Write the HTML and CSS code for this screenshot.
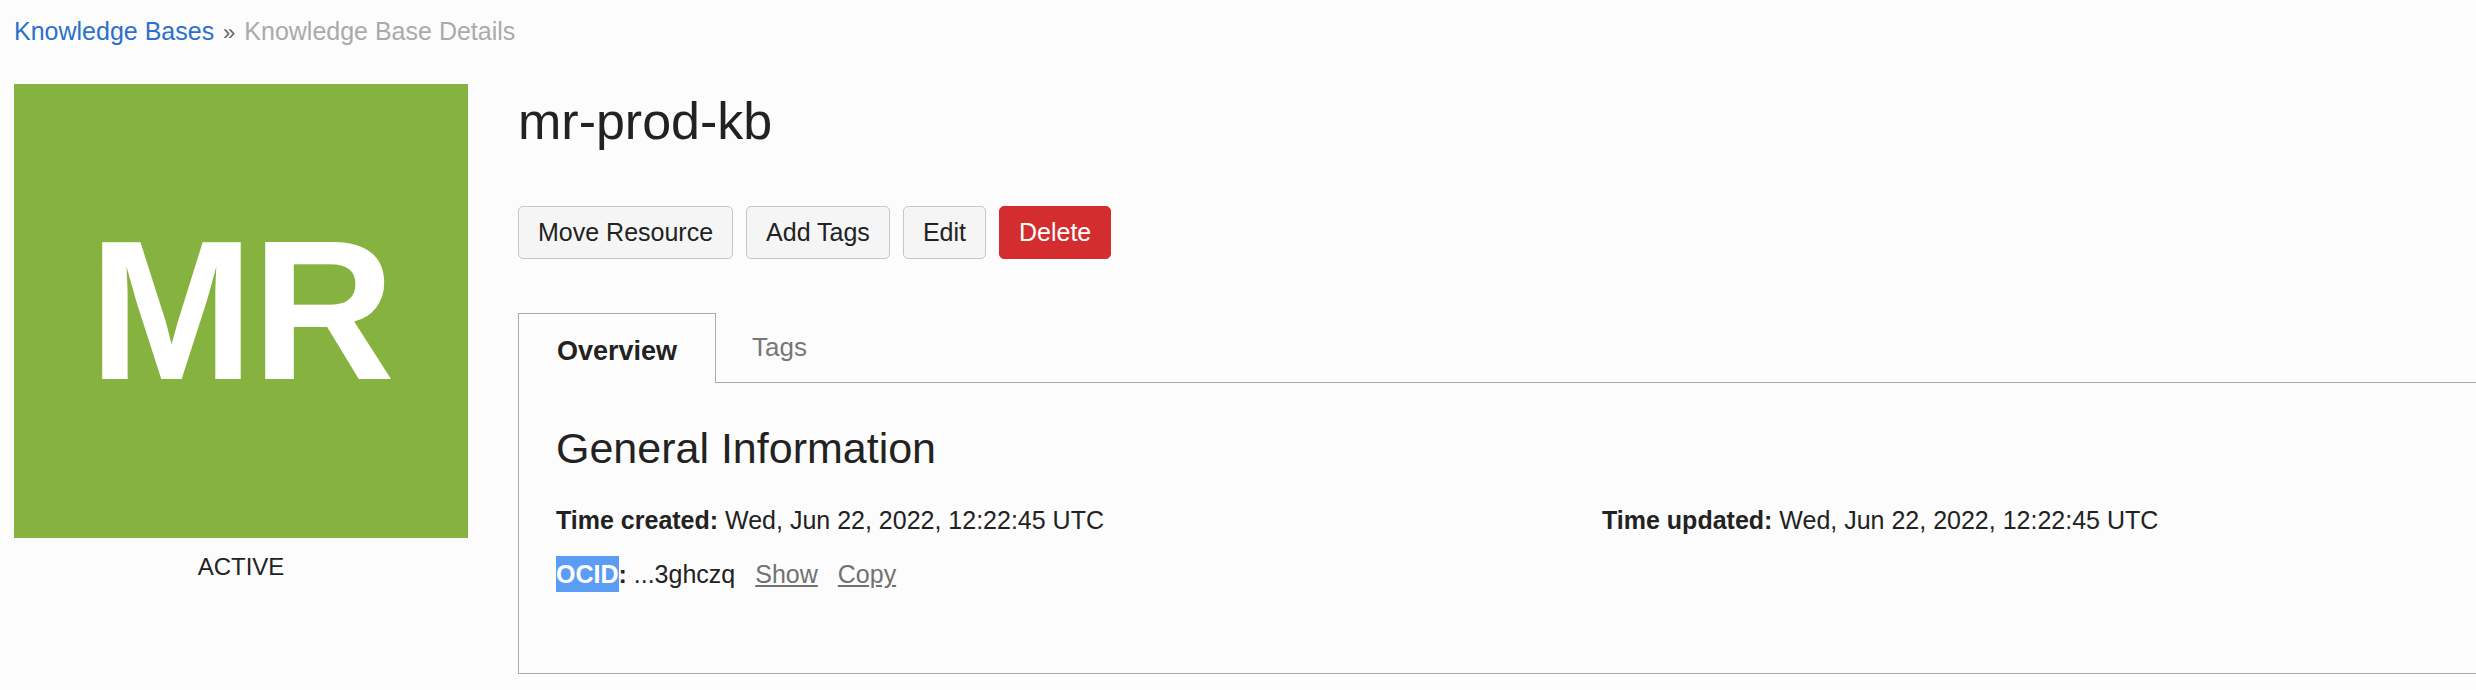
FILE: index.html
```html
<!DOCTYPE html>
<html lang="en">
<head>
<meta charset="utf-8">
<title>Knowledge Base Details</title>
<link rel="stylesheet" href="styles.css">
</head>
<body>
<div class="page">
  <nav class="breadcrumb">
    <a class="crumb-link" href="#">Knowledge Bases</a>
    <span class="crumb-sep">»</span>
    <span class="crumb-current">Knowledge Base Details</span>
  </nav>
  <div class="layout">
    <aside class="side">
      <div class="avatar">MR</div>
      <div class="status">ACTIVE</div>
    </aside>
    <main class="main">
      <h1 class="title">mr-prod-kb</h1>
      <div class="actions">
        <button class="btn">Move Resource</button>
        <button class="btn">Add Tags</button>
        <button class="btn">Edit</button>
        <button class="btn btn-danger">Delete</button>
      </div>
      <div class="tabs">
        <div class="tab tab-active">Overview</div>
        <div class="tab">Tags</div>
      </div>
      <section class="panel">
        <h2 class="panel-title">General Information</h2>
        <div class="info-grid">
          <div class="info-col">
            <div class="info-row"><span class="label">Time created:</span> Wed, Jun 22, 2022, 12:22:45 UTC</div>
            <div class="info-row"><span class="label"><span class="selected">OCID</span>:</span> ...3ghczq<a class="inline-link" href="#">Show</a><a class="inline-link" href="#">Copy</a></div>
          </div>
          <div class="info-col">
            <div class="info-row"><span class="label">Time updated:</span> Wed, Jun 22, 2022, 12:22:45 UTC</div>
          </div>
        </div>
      </section>
    </main>
  </div>
</div>
</body>
</html>
```
FILE: styles.css
```css
* {
  box-sizing: border-box;
}

html, body {
  margin: 0;
  padding: 0;
  background: #fcfcfc;
  overflow: hidden;
}

body {
  font-family: "Liberation Sans", Arial, Helvetica, sans-serif;
  color: #222222;
}

.page {
  padding-left: 14px;
}

.breadcrumb {
  padding-top: 16px;
  font-size: 25px;
  line-height: 30px;
  height: 84px;
  white-space: nowrap;
}

.crumb-link {
  color: #2c70cb;
  text-decoration: none;
}

.crumb-sep {
  color: #666666;
  font-size: 22px;
  margin: 0 2px;
}

.crumb-current {
  color: #aaaaaa;
}

.layout {
  display: flex;
  align-items: flex-start;
  gap: 50px;
}

.side {
  width: 454px;
  flex: none;
  display: flex;
  flex-direction: column;
  align-items: center;
}

.avatar {
  width: 454px;
  height: 454px;
  background: #86b23f;
  color: #ffffff;
  font-weight: bold;
  font-size: 198px;
  line-height: 1;
  display: flex;
  align-items: center;
  justify-content: center;
  letter-spacing: -2px;
}

.status {
  margin-top: 15px;
  font-size: 24px;
  line-height: 28px;
  color: #222222;
}

.main {
  flex: 1;
  min-width: 0;
}

.title {
  margin: 7px 0 0;
  font-size: 52px;
  font-weight: normal;
  line-height: 60px;
  color: #222222;
}

.actions {
  margin-top: 55px;
  display: flex;
  gap: 13px;
}

.btn {
  height: 53px;
  padding: 0 19px;
  font-family: inherit;
  font-size: 25px;
  color: #222222;
  background: #f5f5f5;
  border: 1px solid #c3c6ca;
  border-radius: 5px;
}

.btn-danger {
  background: #d32d2f;
  border-color: #d32d2f;
  color: #ffffff;
}

.tabs {
  margin-top: 54px;
  display: flex;
  height: 70px;
  border-bottom: 1px solid #ababab;
}

.tab {
  height: 69px;
  padding: 0 36px;
  font-size: 26px;
  line-height: 69px;
  color: #777777;
}

.tab-active {
  height: 70px;
  padding: 6px 38px 0;
  line-height: 63px;
  font-size: 27px;
  font-weight: bold;
  color: #222222;
  background: #fcfcfc;
  border: 1px solid #ababab;
  border-bottom: none;
}

.panel {
  border-left: 1px solid #ababab;
  border-bottom: 1px solid #ababab;
  padding: 41px 0 81px 37px;
}

.panel-title {
  margin: 0;
  font-size: 43px;
  font-weight: normal;
  line-height: 48px;
  color: #222222;
}

.info-grid {
  margin-top: 30px;
  display: grid;
  grid-template-columns: 1046px 1fr;
}

.info-col {
  display: flex;
  flex-direction: column;
  gap: 18px;
}

.info-row {
  font-size: 25px;
  line-height: 36px;
  white-space: nowrap;
}

.label {
  font-weight: bold;
}

.selected {
  display: inline-block;
  line-height: 36px;
  background: #5b9df5;
  color: #ffffff;
}

.inline-link {
  margin-left: 20px;
  color: #717171;
  text-decoration: underline;
}
```
